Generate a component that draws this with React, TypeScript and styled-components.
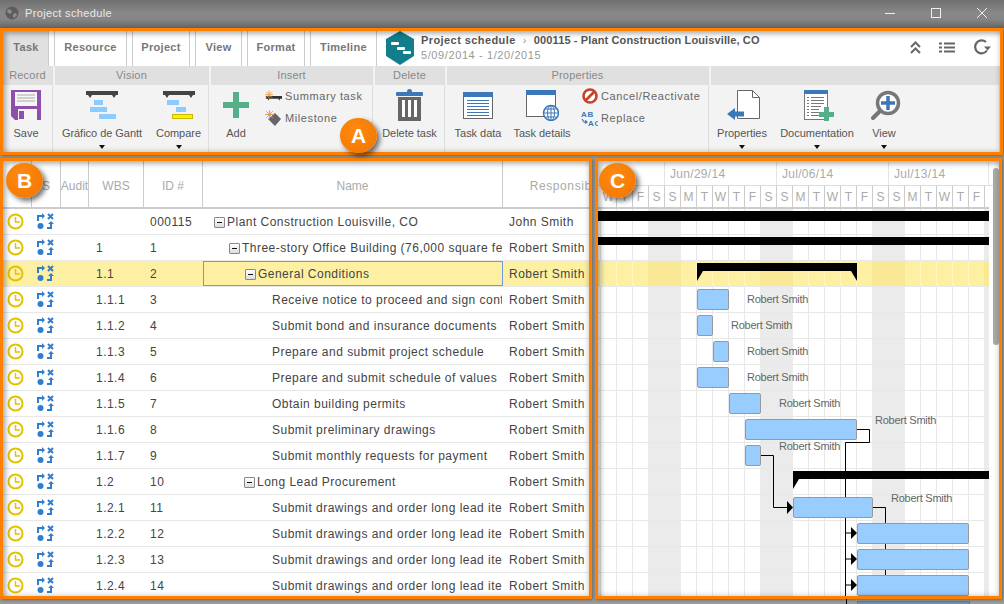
import styled, { createGlobalStyle } from 'styled-components'

const GlobalStyle = createGlobalStyle`
  html, body {
    margin: 0;
    padding: 0;
    background: #9c9c9c;
    overflow: hidden;
  }
  * {
    box-sizing: border-box;
  }
`

const ORANGE = '#ff8000'
const COLUMNS = '29px 29px 28px 55px 59px 300px 126px'

const Root = styled.div`
  position: relative;
  width: 1004px;
  height: 604px;
  overflow: hidden;
  display: flex;
  flex-direction: column;
  background: #9c9c9c;
  font-family: 'Liberation Sans', Arial, sans-serif;
`

const TitleBar = styled.div`
  height: 28px;
  flex: none;
  display: flex;
  align-items: center;
  padding: 0 16px 2px 5px;
  background: linear-gradient(#707070, #888 45%, #858585 70%, #666);
  color: #e9e9e9;
  font-size: 11px;
  letter-spacing: 0.35px;
`

const TitleText = styled.span`
  margin-left: 6px;
  flex: 1;
`

const WindowButtons = styled.div`
  display: flex;
  gap: 34px;
  align-items: center;
`

/* the orange annotation frame, with the dark inner edge drawn over the content */
const Frame = styled.div`
  position: relative;
  border: 3px solid ${ORANGE};
  overflow: hidden;
  box-shadow: 1px 1px 3px rgba(0, 0, 0, 0.35);

  &::after {
    content: '';
    position: absolute;
    inset: 0;
    pointer-events: none;
    z-index: 5;
    box-shadow: inset 3px 3px 5px rgba(0, 0, 0, 0.3), inset -2px -2px 4px rgba(0, 0, 0, 0.12);
  }
`

const RibbonFrame = styled(Frame)`
  width: 1003px;
  height: 127px;
  flex: none;
  display: flex;
  flex-direction: column;
  background: #f3f3f3;
`

const TabRow = styled.div`
  height: 35px;
  flex: none;
  display: flex;
  background: #fff;
`

const Tab = styled.div<{ $active?: boolean; $w: number }>`
  width: ${(p) => p.$w}px;
  margin-right: 5px;
  display: flex;
  align-items: center;
  justify-content: center;
  padding-bottom: 4px;
  font-size: 11px;
  font-weight: bold;
  letter-spacing: 0.3px;
  color: #777;
  background: ${(p) => (p.$active ? '#e0e0e0' : '#fff')};
  border-right: 1px solid #ccc;
  border-left: 1px solid ${(p) => (p.$active ? '#e0e0e0' : '#ccc')};
`

const ProjectInfo = styled.div`
  margin-left: 3px;
  display: flex;
  flex: 1;
  align-items: flex-start;
`

const InfoText = styled.div`
  margin-left: 6px;
  padding-top: 2px;
`

const InfoTitle = styled.div`
  font-size: 11px;
  font-weight: bold;
  letter-spacing: 0.42px;
  color: #555;
  line-height: 14px;
  white-space: nowrap;
`

const Crumb = styled.span`
  font-weight: normal;
  color: #999;
  margin: 0 7px;
`

const InfoPath = styled.span`
  letter-spacing: 0.12px;
`

const InfoDate = styled.div`
  font-size: 11px;
  color: #999;
  letter-spacing: 0.6px;
  line-height: 14px;
  margin-top: 1px;
`

const TopActions = styled.div`
  margin-left: auto;
  display: flex;
  align-items: center;
  gap: 18px;
  padding: 0 9px 3px 0;
  height: 35px;
`

const GroupRow = styled.div`
  flex: 1;
  display: flex;
  gap: 3px;
`

const Group = styled.div<{ $w: number }>`
  width: ${(p) => p.$w}px;
  flex: none;
  display: flex;
  flex-direction: column;
  box-shadow: 1px 0 0 #dedede;
`

const GroupTitle = styled.div`
  height: 19px;
  flex: none;
  background: #e0e0e0;
  color: #888;
  font-size: 11px;
  letter-spacing: 0.2px;
  padding-bottom: 1px;
  display: flex;
  align-items: center;
  justify-content: center;
`

const GroupBody = styled.div`
  flex: 1;
  display: flex;
`

const Tool = styled.div<{ $w: number }>`
  width: ${(p) => p.$w}px;
  flex: none;
  display: grid;
  grid-template-rows: 40px 16px 11px;
  justify-items: center;
  align-items: center;
  color: #555;
  font-size: 11px;
  letter-spacing: -0.03px;
  white-space: nowrap;
`

const Caret = styled.span`
  width: 0;
  height: 0;
  border-left: 3px solid transparent;
  border-right: 3px solid transparent;
  border-top: 4px solid #111;
`

const SmallList = styled.div<{ $ml: number }>`
  margin-left: ${(p) => p.$ml}px;
  display: flex;
  flex-direction: column;
`

const SmallTool = styled.div`
  height: 22px;
  display: flex;
  align-items: center;
  gap: 3px;
  color: #666;
  font-size: 11px;
  letter-spacing: 0.6px;
  white-space: nowrap;
`

const SmallIcon = styled.span`
  width: 17px;
  height: 18px;
  display: flex;
  align-items: center;
  justify-content: center;
  flex: none;
`

const Panes = styled.div`
  margin-top: 3px;
  height: 441px;
  flex: none;
  display: flex;
  gap: 3px;
`

const TablePane = styled(Frame)`
  width: 592px;
  background: #fff;
`

const GanttPane = styled(Frame)`
  width: 407px;
  background: #fff;
`

const TableHead = styled.div`
  display: grid;
  grid-template-columns: ${COLUMNS};
  height: 48px;
  border-bottom: 2px solid #ccc;
`

const HeadCell = styled.div<{ $spaced?: boolean }>`
  display: flex;
  align-items: center;
  justify-content: center;
  overflow: hidden;
  white-space: nowrap;
  border-right: 1px solid #ccc;
  color: #aaa;
  font-size: 12px;
  letter-spacing: ${(p) => (p.$spaced ? 0.6 : 0)}px;
  padding-top: 3px;

  &:last-child {
    border-right: none;
  }
`

const TableRow = styled.div<{ $selected?: boolean }>`
  display: grid;
  grid-template-columns: ${COLUMNS};
  height: 26px;
  align-items: center;
  border-bottom: 1px solid #e8e8e8;
  background: ${(p) => (p.$selected ? '#fdf0a2' : '#fff')};
  color: #444;
  font-size: 12px;
  letter-spacing: 0.48px;
`

const IconCell = styled.div<{ $pr: number }>`
  display: flex;
  justify-content: center;
  align-items: center;
  height: 100%;
  padding-right: ${(p) => p.$pr}px;
`

const TextCell = styled.div<{ $pl: number }>`
  padding: 1px 0 0 ${(p) => p.$pl}px;
  white-space: nowrap;
  overflow: hidden;
`

const NameCell = styled.div<{ $indent: number; $selected?: boolean }>`
  height: 100%;
  display: flex;
  align-items: center;
  padding: 1px 0 0 ${(p) => p.$indent}px;
  white-space: nowrap;
  overflow: hidden;
  border: 1px solid ${(p) => (p.$selected ? '#6e9be0' : 'transparent')};
  border-left-width: ${(p) => (p.$selected ? 1 : 0)}px;
`

const Toggle = styled.span`
  width: 11px;
  height: 11px;
  margin-right: 2px;
  flex: none;
  display: flex;
  align-items: center;
  justify-content: center;
  border: 1px solid #888;
  border-radius: 1px;
  background: linear-gradient(#fff, #ddd);

  &::before {
    content: '';
    width: 5px;
    height: 1px;
    background: #111;
  }
`

const WeekRow = styled.div`
  height: 25px;
  display: flex;
  border-bottom: 1px solid #ddd;
  padding-top: 1px;
  color: #aaa;
  font-size: 12px;
  letter-spacing: 0.3px;
`

const WeekCell = styled.div<{ $w: number }>`
  width: ${(p) => p.$w}px;
  flex: none;
  display: flex;
  align-items: center;
  padding-left: 5px;
  border-right: 1px solid #e4e4e4;
  white-space: nowrap;
`

const DayRow = styled.div`
  height: 23px;
  width: 391px;
  display: flex;
  padding-left: 3px;
  overflow: hidden;
  border-bottom: 2px solid #ccc;
  color: #aaa;
  font-size: 12px;
`

const DayCell = styled.div`
  width: 16px;
  flex: none;
  display: flex;
  align-items: center;
  justify-content: center;
  border-right: 1px solid #ccc;
`

const Timeline = styled.div`
  position: relative;
  width: 391px;
  background:
    linear-gradient(90deg, transparent 50px, #ebebeb 50px 83px, transparent 83px) 0 0 / 112px 100%,
    linear-gradient(90deg, #e8e8e8 1px, transparent 1px) 2px 0 / 16px 100%;
`

const GanttRow = styled.div<{ $selected?: boolean }>`
  position: relative;
  height: 26px;
  border-bottom: 1px solid #e8e8e8;
  background: ${(p) =>
    p.$selected
      ? `linear-gradient(90deg, transparent 50px, #f9e996 50px 83px, transparent 83px) 0 0 / 112px 100%,
         linear-gradient(90deg, #fff6c4 1px, transparent 1px) 2px 0 / 16px 100%, #fdf0a2`
      : 'transparent'};
`

const Links = styled.svg`
  position: absolute;
  left: 0;
  top: 0;
  z-index: 1;
`

const TaskBar = styled.div<{ $left: number; $w: number }>`
  position: absolute;
  z-index: 2;
  left: ${(p) => p.$left}px;
  width: ${(p) => p.$w}px;
  top: 2px;
  height: 21px;
  background: #99ccff;
  border: 1px solid #999;
  border-radius: 2px;
`

const SummaryBar = styled.div<{ $left: number; $w: number; $h?: number; $top?: number; $legs?: 'both' | 'left' }>`
  position: absolute;
  z-index: 2;
  left: ${(p) => p.$left}px;
  width: ${(p) => p.$w}px;
  top: ${(p) => p.$top ?? 2}px;
  height: ${(p) => p.$h ?? 8}px;
  background: #000;

  &::before {
    content: '';
    display: ${(p) => (p.$legs ? 'block' : 'none')};
    position: absolute;
    left: 0;
    top: 100%;
    border-top: 10px solid #000;
    border-right: 6px solid transparent;
  }

  &::after {
    content: '';
    display: ${(p) => (p.$legs === 'both' ? 'block' : 'none')};
    position: absolute;
    right: 0;
    top: 100%;
    border-top: 10px solid #000;
    border-left: 6px solid transparent;
  }
`

const Assignee = styled.span<{ $left: number; $up?: boolean }>`
  position: absolute;
  z-index: 2;
  left: ${(p) => p.$left}px;
  top: ${(p) => (p.$up ? -3 : 6)}px;
  color: #666;
  font-size: 11px;
  letter-spacing: -0.25px;
  line-height: 13px;
  white-space: nowrap;
`

const ScrollThumb = styled.div`
  position: absolute;
  left: 395px;
  top: 7px;
  width: 6px;
  height: 177px;
  border-radius: 3px;
  background: #aaa;
  z-index: 3;
`

const BottomStrip = styled.div`
  flex: 1;
  display: flex;
  align-items: flex-start;
  padding-left: 846px;
`

const StripLine = styled.span`
  width: 1px;
  height: 5px;
  background: #000;
`

const StripBar = styled.span`
  margin: 2px 0 0 10px;
  width: 113px;
  height: 3px;
  background: #6b8fb5;
  border: 1px solid #7a7a7a;
  border-bottom: none;
`

const Badge = styled.div<{ $x: number; $y: number }>`
  position: absolute;
  left: ${(p) => p.$x}px;
  top: ${(p) => p.$y}px;
  width: 37px;
  height: 35px;
  z-index: 10;
  border-radius: 50%;
  background: radial-gradient(circle at 40% 35%, #ff8a10, #f07400);
  box-shadow: 3px 3px 5px rgba(0, 0, 0, 0.55);
  color: #fff;
  font-size: 21px;
  font-weight: bold;
  display: flex;
  align-items: center;
  justify-content: center;
`

const GlobeIcon = () => (
  <svg width="14" height="14" viewBox="0 0 14 14">
    <circle cx="7" cy="7" r="6.5" fill="#5c5c5c" />
    <path d="M3 3l3 1 1 2-2 2-3-2zM8 8l3-1 1 2-3 3-1-1z" fill="#8e8e8e" />
  </svg>
)

const MinIcon = () => (
  <svg width="12" height="12" viewBox="0 0 12 12">
    <path d="M1 6.5h10" stroke="#eee" strokeWidth="1" />
  </svg>
)

const MaxIcon = () => (
  <svg width="12" height="12" viewBox="0 0 12 12">
    <rect x="1.5" y="1.5" width="9" height="9" fill="none" stroke="#eee" />
  </svg>
)

const CloseIcon = () => (
  <svg width="12" height="12" viewBox="0 0 12 12">
    <path d="M1 1l10 10M11 1L1 11" stroke="#eee" strokeWidth="1" />
  </svg>
)

const LogoIcon = () => (
  <svg width="30" height="34" viewBox="0 0 30 34">
    <path d="M15 0l14 8v17l-14 9-14-9V8z" fill="#127e8c" />
    <rect x="6" y="11" width="8" height="3" rx="1" fill="#fff" />
    <rect x="12" y="16" width="8" height="3" rx="1" fill="#fff" />
    <rect x="18" y="20" width="8" height="3" rx="1" fill="#fff" />
  </svg>
)

const CollapseIcon = () => (
  <svg width="11" height="13" viewBox="0 0 11 13">
    <path d="M1 6l4.5-4.5L10 6M1 12l4.5-4.5L10 12" fill="none" stroke="#666" strokeWidth="2" />
  </svg>
)

const ListIcon = () => (
  <svg width="16" height="11" viewBox="0 0 16 11">
    <path d="M0 1.5h3M5 1.5h11M0 5.5h3M5 5.5h11M0 9.5h3M5 9.5h11" stroke="#666" strokeWidth="2" />
  </svg>
)

const RefreshIcon = () => (
  <svg width="18" height="16" viewBox="0 0 18 16">
    <path d="M14 11.5A6.5 6.5 0 1 1 13 3" fill="none" stroke="#666" strokeWidth="2.2" />
    <path d="M11 7.5h7l-3.5 4z" fill="#666" />
  </svg>
)

const SaveIcon = () => (
  <svg width="30" height="30" viewBox="0 0 30 30">
    <path d="M0 0h30v30H4l-4-4z" fill="#8e50ab" />
    <rect x="4" y="2" width="22" height="14" fill="#f6f6f6" />
    <path d="M6 5h18M6 8h18M6 11h18" stroke="#aaa" />
    <rect x="7" y="19" width="19" height="11" fill="#f6f6f6" />
    <rect x="8" y="21" width="5" height="8" fill="#8e50ab" />
  </svg>
)

const GanttIcon = ({ last, second }: { last: string; second?: boolean }) => (
  <svg width="32" height="28" viewBox="0 0 32 28">
    <path d="M0 0h32v4h-2l-2 3-2-3H6L4 7 2 4H0z" fill="#444" />
    {second ? (
      <>
        <rect x="4" y="9" width="12" height="5" fill="#8ccbff" />
        <rect x="13" y="16" width="10" height="5" fill="#8ccbff" />
        <rect x="9.5" y="23.5" width="20" height="4" fill="#ffee00" stroke="#c9b800" />
      </>
    ) : (
      <>
        <rect x="8" y="9" width="9" height="5" fill="#8ccbff" />
        <rect x="4" y="16" width="17" height="5" fill="#8ccbff" />
        <rect x="13" y="23" width="17" height="5" fill={last} />
      </>
    )}
  </svg>
)

const PlusIcon = () => (
  <svg width="26" height="26" viewBox="0 0 26 26">
    <path d="M10 0h6v10h10v6H16v10h-6V16H0v-6h10z" fill="#55b08a" />
  </svg>
)

const Spark = () => (
  <path
    d="M4.5 0v9M0 4.5h9M1.2 1.2l6.6 6.6M7.8 1.2L1.2 7.8"
    stroke="#f0a040"
    strokeWidth="1"
  />
)

const SummaryIcon = () => (
  <svg width="19" height="12" viewBox="0 0 19 12">
    <path d="M1 6h18v3h-2l-1 2-1-2H5l-1 2-1-2H1z" fill="#333" />
    <Spark />
  </svg>
)

const MilestoneIcon = () => (
  <svg width="17" height="17" viewBox="0 0 17 17">
    <path d="M10 3l6 6-6 7-7-7z" fill="#666" />
    <Spark />
  </svg>
)

const TrashIcon = () => (
  <svg width="27" height="32" viewBox="0 0 27 32">
    <circle cx="13.5" cy="2.5" r="2.5" fill="#3c78b8" />
    <rect x="0" y="3" width="27" height="4" rx="1" fill="#3c78b8" />
    <rect x="2" y="8" width="23" height="24" fill="#666" />
    <rect x="6" y="11" width="3" height="17" fill="#fff" />
    <rect x="12" y="11" width="3" height="17" fill="#fff" />
    <rect x="18" y="11" width="3" height="17" fill="#fff" />
  </svg>
)

const TaskDataIcon = () => (
  <svg width="30" height="27" viewBox="0 0 30 27">
    <rect x="0.5" y="0.5" width="29" height="26" fill="#fff" stroke="#666" />
    <rect x="0" y="0" width="30" height="5" fill="#3c78b8" />
    <path d="M4 8.5h22M4 11.5h22M4 14.5h22M4 17.5h22M4 20.5h22M4 23.5h22" stroke="#3c78b8" />
  </svg>
)

const TaskDetailsIcon = () => (
  <svg width="33" height="31" viewBox="0 0 33 31">
    <rect x="0.5" y="0.5" width="29" height="26" fill="#fff" stroke="#666" />
    <rect x="0" y="0" width="30" height="5" fill="#3c78b8" />
    <circle cx="25" cy="23" r="7.5" fill="#fff" stroke="#3c78b8" strokeWidth="1.5" />
    <path d="M17.5 23h15M25 15.5v15M19 19h12M19 27h12" stroke="#3c78b8" />
    <ellipse cx="25" cy="23" rx="3.5" ry="7.5" fill="none" stroke="#3c78b8" />
  </svg>
)

const CancelIcon = () => (
  <svg width="16" height="16" viewBox="0 0 16 16">
    <circle cx="8" cy="8" r="6.5" fill="#fff" stroke="#c9402a" strokeWidth="2.6" />
    <path d="M3.5 12.5l9-9" stroke="#c9402a" strokeWidth="2.6" />
  </svg>
)

const ReplaceIcon = () => (
  <svg width="17" height="17" viewBox="0 0 17 17">
    <text x="0" y="7" fontSize="8" fontWeight="bold" fill="#3c78b8" fontFamily="Liberation Sans">
      AB
    </text>
    <text x="7" y="16" fontSize="8" fontWeight="bold" fill="#3c78b8" fontFamily="Liberation Sans">
      AC
    </text>
    <path d="M1 9l2 3h3M4 10.5L6 12l-2 1.5" fill="none" stroke="#3c78b8" strokeWidth="1.2" />
  </svg>
)

const PropertiesIcon = () => (
  <svg width="35" height="30" viewBox="-2 0 35 30">
    <path d="M10.5.5h15l7 7v21h-22z" fill="#fff" stroke="#666" />
    <path d="M25.5.5v7h7" fill="none" stroke="#666" />
    <path d="M0 24l8-6v3.500h9v5H8V30z" fill="#3c78b8" />
  </svg>
)

const DocumentationIcon = () => (
  <svg width="33" height="31" viewBox="-3 0 33 31">
    <rect x="0.5" y="0.5" width="23" height="29" fill="#fff" stroke="#777" />
    <rect x="0" y="0" width="24" height="4" fill="#3c78b8" />
    <path d="M7 7.500h13M3 7.500h2M7 10.500h13M3 10.500h2M7 13.500h13M3 13.500h2M7 16.500h10M3 16.500h2M7 19.500h8M3 19.500h2M7 22.500h8M3 22.500h2M7 25.500h8M3 25.500h2" stroke="#777" />
    <path d="M20 17h5v5h5v5h-5v4h-5v-4h-5v-5h5z" fill="#55b08a" />
  </svg>
)

const ViewIcon = () => (
  <svg width="34" height="30" viewBox="-4 0 34 30">
    <path d="M10 20L2 28" stroke="#777" strokeWidth="4" strokeLinecap="round" />
    <circle cx="17" cy="13" r="10.500" fill="#fff" stroke="#777" strokeWidth="3.500" />
    <path d="M17 6v14M10 13h14" stroke="#3c78b8" strokeWidth="3.500" />
  </svg>
)

const ClockIcon = () => (
  <svg width="17" height="17" viewBox="0 0 17 17">
    <circle cx="8.500" cy="8.500" r="7" fill="none" stroke="#e3c300" strokeWidth="2" />
    <path d="M8.500 4v5H13" fill="none" stroke="#e3c300" strokeWidth="1.500" />
  </svg>
)

const LinksIcon = () => (
  <svg width="17" height="17" viewBox="0 0 17 17">
    <g fill="none" stroke="#2f7ed0" strokeWidth="2">
      <path d="M1 8V3h4" />
      <path d="M11 1l5 5M16 1l-5 5" />
      <path d="M10 15h4v-4" />
    </g>
    <path d="M5 0l3 3-3 3zM11 11l3-3 3 3z" fill="#2f7ed0" />
    <circle cx="3.500" cy="13" r="3" fill="#2f7ed0" />
  </svg>
)

type TaskRow = { wbs?: string; id: string; name: string; level: number; toggle?: boolean; owner: string }

const leadName = 'Submit drawings and order long lead items'

const rows: TaskRow[] = [
  { id: '000115', name: 'Plant Construction Louisville, CO', level: 0, toggle: true, owner: 'John Smith' },
  { wbs: '1', id: '1', name: 'Three-story Office Building (76,000 square feet)', level: 1, toggle: true, owner: 'Robert Smith' },
  { wbs: '1.1', id: '2', name: 'General Conditions', level: 2, toggle: true, owner: 'Robert Smith' },
  { wbs: '1.1.1', id: '3', name: 'Receive notice to proceed and sign contract', level: 3, owner: 'Robert Smith' },
  { wbs: '1.1.2', id: '4', name: 'Submit bond and insurance documents', level: 3, owner: 'Robert Smith' },
  { wbs: '1.1.3', id: '5', name: 'Prepare and submit project schedule', level: 3, owner: 'Robert Smith' },
  { wbs: '1.1.4', id: '6', name: 'Prepare and submit schedule of values', level: 3, owner: 'Robert Smith' },
  { wbs: '1.1.5', id: '7', name: 'Obtain building permits', level: 3, owner: 'Robert Smith' },
  { wbs: '1.1.6', id: '8', name: 'Submit preliminary drawings', level: 3, owner: 'Robert Smith' },
  { wbs: '1.1.7', id: '9', name: 'Submit monthly requests for payment', level: 3, owner: 'Robert Smith' },
  { wbs: '1.2', id: '10', name: 'Long Lead Procurement', level: 2, toggle: true, owner: 'Robert Smith' },
  { wbs: '1.2.1', id: '11', name: leadName, level: 3, owner: 'Robert Smith' },
  { wbs: '1.2.2', id: '12', name: leadName, level: 3, owner: 'Robert Smith' },
  { wbs: '1.2.3', id: '13', name: leadName, level: 3, owner: 'Robert Smith' },
  { wbs: '1.2.4', id: '14', name: leadName, level: 3, owner: 'Robert Smith' }
]

const days = 'WTFSSMTWTFSSMTWTFSSMTWTF'.split('')

// bars, in px from the left of the timeline
type Bar = { left: number; w: number; label?: number; up?: boolean }
const bars: Record<number, Bar> = {
  3: { left: 99, w: 32, label: 149 },
  4: { left: 99, w: 16, label: 133 },
  5: { left: 115, w: 16, label: 149 },
  6: { left: 99, w: 32, label: 149 },
  7: { left: 131, w: 32, label: 181 },
  8: { left: 147, w: 112, label: 277, up: true },
  9: { left: 147, w: 16, label: 181, up: true },
  11: { left: 195, w: 80, label: 293, up: true },
  12: { left: 259, w: 112 },
  13: { left: 259, w: 112 },
  14: { left: 259, w: 112 }
}

const Head = (i: number) => (
  <polygon key={i} points={`253,${i - 6} 259,${i} 253,${i + 6}`} fill="#000" />
)

export default function App() {
  return (
    <Root>
      <GlobalStyle />
      <TitleBar>
        <GlobeIcon />
        <TitleText>Project schedule</TitleText>
        <WindowButtons>
          <MinIcon />
          <MaxIcon />
          <CloseIcon />
        </WindowButtons>
      </TitleBar>

      <RibbonFrame>
        <TabRow>
          <Tab $active $w={46}>Task</Tab>
          <Tab $w={73}>Resource</Tab>
          <Tab $w={58}>Project</Tab>
          <Tab $w={47}>View</Tab>
          <Tab $w={58}>Format</Tab>
          <Tab $w={67}>Timeline</Tab>
          <ProjectInfo>
            <LogoIcon />
            <InfoText>
              <InfoTitle>
                Project schedule<Crumb>›</Crumb>
                <InfoPath>000115 - Plant Construction Louisville, CO</InfoPath>
              </InfoTitle>
              <InfoDate>5/09/2014 - 1/20/2015</InfoDate>
            </InfoText>
            <TopActions>
              <CollapseIcon />
              <ListIcon />
              <RefreshIcon />
            </TopActions>
          </ProjectInfo>
        </TabRow>
        <GroupRow>
          <Group $w={49}>
            <GroupTitle>Record</GroupTitle>
            <GroupBody>
              <Tool $w={46}>
                <SaveIcon />
                <span>Save</span>
              </Tool>
            </GroupBody>
          </Group>
          <Group $w={153}>
            <GroupTitle>Vision</GroupTitle>
            <GroupBody>
              <Tool $w={94}>
                <GanttIcon last="#8ccbff" />
                <span>Gráfico de Gantt</span>
                <Caret />
              </Tool>
              <Tool $w={59}>
                <GanttIcon last="#ffee00" second />
                <span>Compare</span>
                <Caret />
              </Tool>
            </GroupBody>
          </Group>
          <Group $w={161}>
            <GroupTitle>Insert</GroupTitle>
            <GroupBody>
              <Tool $w={50}>
                <PlusIcon />
                <span>Add</span>
              </Tool>
              <SmallList $ml={4}>
                <SmallTool>
                  <SmallIcon><SummaryIcon /></SmallIcon>
                  Summary task
                </SmallTool>
                <SmallTool>
                  <SmallIcon><MilestoneIcon /></SmallIcon>
                  Milestone
                </SmallTool>
              </SmallList>
            </GroupBody>
          </Group>
          <Group $w={69}>
            <GroupTitle>Delete</GroupTitle>
            <GroupBody>
              <Tool $w={69}>
                <TrashIcon />
                <span>Delete task</span>
              </Tool>
            </GroupBody>
          </Group>
          <Group $w={261}>
            <GroupTitle>Properties</GroupTitle>
            <GroupBody>
              <Tool $w={62}>
                <TaskDataIcon />
                <span>Task data</span>
              </Tool>
              <Tool $w={66}>
                <TaskDetailsIcon />
                <span>Task details</span>
              </Tool>
              <SmallList $ml={6}>
                <SmallTool>
                  <SmallIcon><CancelIcon /></SmallIcon>
                  Cancel/Reactivate
                </SmallTool>
                <SmallTool>
                  <SmallIcon><ReplaceIcon /></SmallIcon>
                  Replace
                </SmallTool>
              </SmallList>
            </GroupBody>
          </Group>
          <Group $w={288}>
            <GroupTitle />
            <GroupBody>
              <Tool $w={62}>
                <PropertiesIcon />
                <span>Properties</span>
                <Caret />
              </Tool>
              <Tool $w={88}>
                <DocumentationIcon />
                <span>Documentation</span>
                <Caret />
              </Tool>
              <Tool $w={46}>
                <ViewIcon />
                <span>View</span>
                <Caret />
              </Tool>
            </GroupBody>
          </Group>
        </GroupRow>
      </RibbonFrame>

      <Panes>
        <TablePane>
          <TableHead>
            <HeadCell />
            <HeadCell>S</HeadCell>
            <HeadCell>Audit</HeadCell>
            <HeadCell>WBS</HeadCell>
            <HeadCell>ID #</HeadCell>
            <HeadCell>Name</HeadCell>
            <HeadCell $spaced>Responsible</HeadCell>
          </TableHead>
          {rows.map((r) => (
            <TableRow key={r.id} $selected={r.id === '2'}>
              <IconCell $pr={5}><ClockIcon /></IconCell>
              <IconCell $pr={3}><LinksIcon /></IconCell>
              <span />
              <TextCell $pl={7}>{r.wbs}</TextCell>
              <TextCell $pl={6}>{r.id}</TextCell>
              <NameCell $indent={11 + r.level * 15 + (r.toggle ? 0 : 13)} $selected={r.id === '2'}>
                {r.toggle && <Toggle />}
                {r.name}
              </NameCell>
              <TextCell $pl={6}>{r.owner}</TextCell>
            </TableRow>
          ))}
        </TablePane>

        <GanttPane>
          <WeekRow>
            <WeekCell $w={67} />
            <WeekCell $w={112}>Jun/29/14</WeekCell>
            <WeekCell $w={112}>Jul/06/14</WeekCell>
            <WeekCell $w={100}>Jul/13/14</WeekCell>
          </WeekRow>
          <DayRow>
            {days.map((d, i) => (
              <DayCell key={i}>{d}</DayCell>
            ))}
          </DayRow>
          <Timeline>
            <Links width="391" height="400" viewBox="0 0 391 400">
              <path
                d="M259 220.500H271.500V233.500H247.500V400M247.500 324H254M247.500 350H254M247.500 376H254"
                fill="none"
                stroke="#000"
              />
              <path d="M163 246.500H175.500V298.500H190M275 298.500H287.500V400" fill="none" stroke="#000" />
              {[324, 350, 376].map(Head)}
              <polygon points="189,292 195,298.500 189,305" fill="#000" />
            </Links>
            {rows.map((r, i) => {
              const bar = bars[i]
              return (
                <GanttRow key={r.id} $selected={i === 2}>
                  {i === 0 && <SummaryBar $left={0} $w={391} $h={10} />}
                  {i === 1 && <SummaryBar $left={0} $w={391} />}
                  {i === 2 && <SummaryBar $left={99} $w={160} $legs="both" />}
                  {i === 10 && <SummaryBar $left={195} $w={196} $legs="left" />}
                  {bar && <TaskBar $left={bar.left} $w={bar.w} />}
                  {bar && bar.label !== undefined && (
                    <Assignee $left={bar.label} $up={bar.up}>Robert Smith</Assignee>
                  )}
                </GanttRow>
              )
            })}
          </Timeline>
          <ScrollThumb />
        </GanttPane>
      </Panes>

      <BottomStrip>
        <StripLine />
        <StripBar />
      </BottomStrip>

      <Badge $x={340} $y={118}>A</Badge>
      <Badge $x={6} $y={163}>B</Badge>
      <Badge $x={599} $y={163}>C</Badge>
    </Root>
  )
}
